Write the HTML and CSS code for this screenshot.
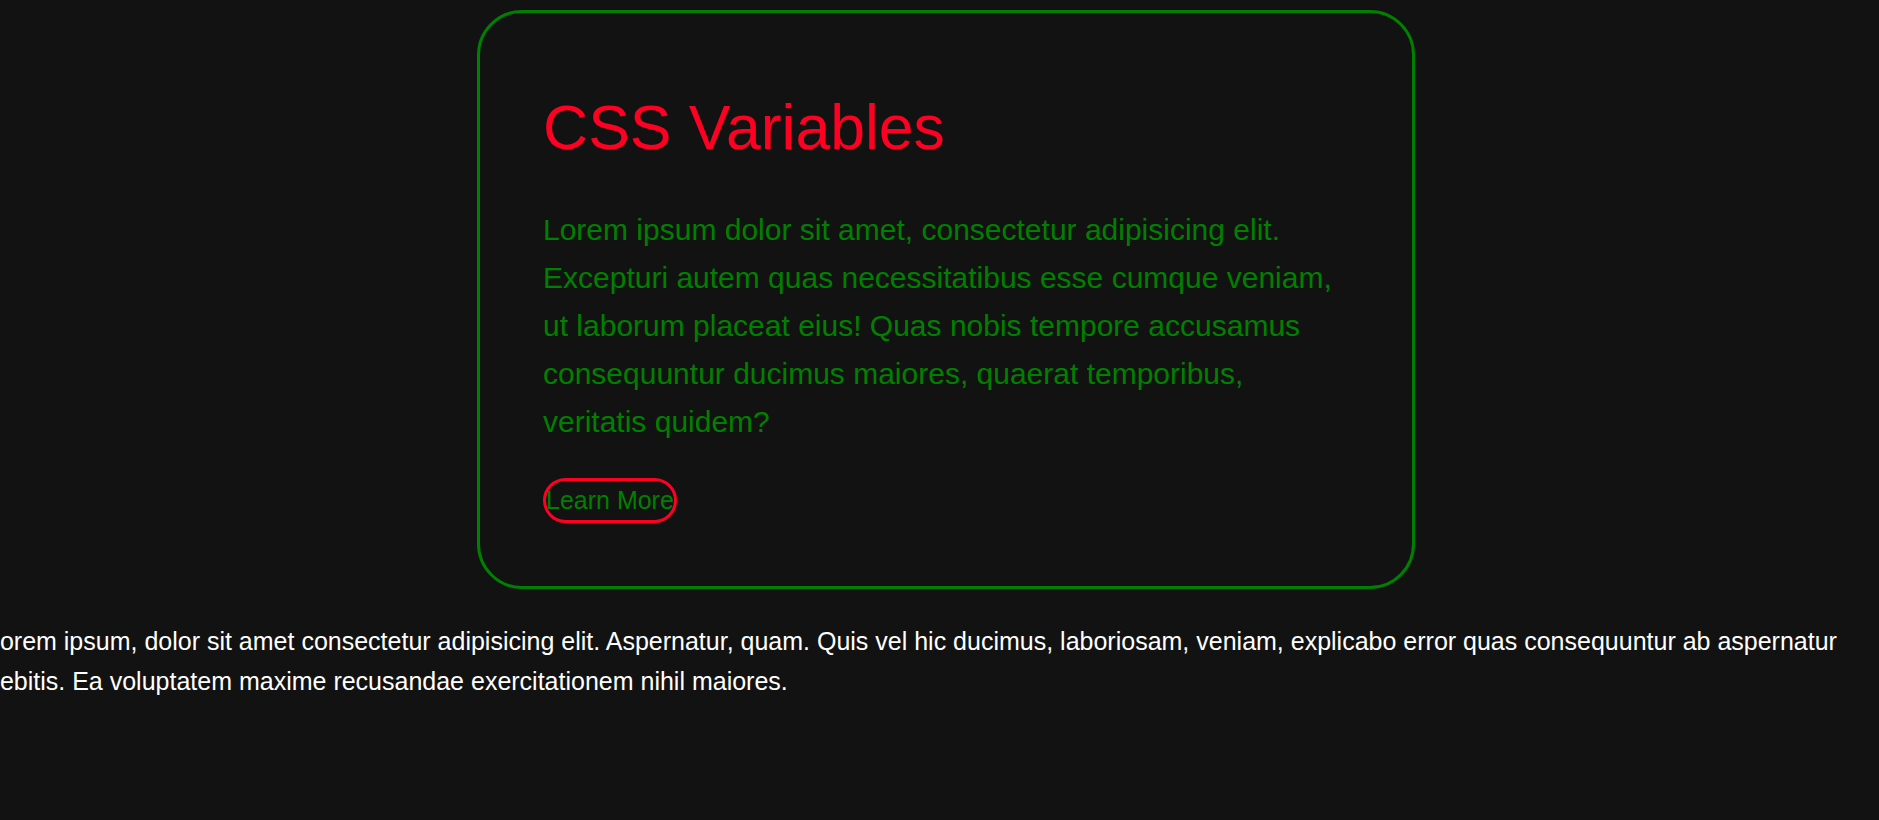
FILE: index.html
```html
<!DOCTYPE html>
<html lang="en">
<head>
<meta charset="utf-8">
<title>CSS Variables</title>
<link rel="stylesheet" href="styles.css">
</head>
<body>
  <div class="card">
    <h1 class="card-title">CSS Variables</h1>
    <p class="card-text">Lorem ipsum dolor sit amet, consectetur adipisicing elit. Excepturi autem quas necessitatibus esse cumque veniam, ut laborum placeat eius! Quas nobis tempore accusamus consequuntur ducimus maiores, quaerat temporibus, veritatis quidem?</p>
    <a class="card-btn" href="#">Learn More</a>
  </div>
  <p class="outer-text">Lorem ipsum, dolor sit amet consectetur adipisicing elit. Aspernatur, quam. Quis vel hic ducimus, laboriosam, veniam, explicabo error quas consequuntur ab aspernatur debitis. Ea voluptatem maxime recusandae exercitationem nihil maiores.</p>
</body>
</html>
```
FILE: styles.css
```css
html, body {
  margin: 0;
  padding: 0;
}

body {
  background: #121212;
  color: #ffffff;
  font-family: "Liberation Sans", Arial, sans-serif;
  overflow: hidden;
  padding-top: 10px;
}

.card {
  box-sizing: border-box;
  width: 938px;
  margin-left: 477px;
  border: 3px solid #008000;
  border-radius: 45px;
  padding: 62px 59px 63px 63px;
  display: flex;
  flex-direction: column;
  align-items: flex-start;
}

.card-title {
  margin: 16px 0 43px 0;
  font-size: 62.5px;
  font-weight: normal;
  line-height: normal;
  color: #ff0022;
}

.card-text {
  margin: 0;
  font-size: 30px;
  line-height: 48px;
  color: #008000;
}

.card-btn {
  margin-top: 32px;
  padding: 5px 0;
  border: 3px solid #ff0022;
  border-radius: 30px;
  font-size: 25px;
  line-height: normal;
  color: #008000;
  text-decoration: none;
  white-space: nowrap;
}

.outer-text {
  margin: 32px 0 0 -14px;
  font-size: 25px;
  line-height: 40px;
  color: #ffffff;
}
```
